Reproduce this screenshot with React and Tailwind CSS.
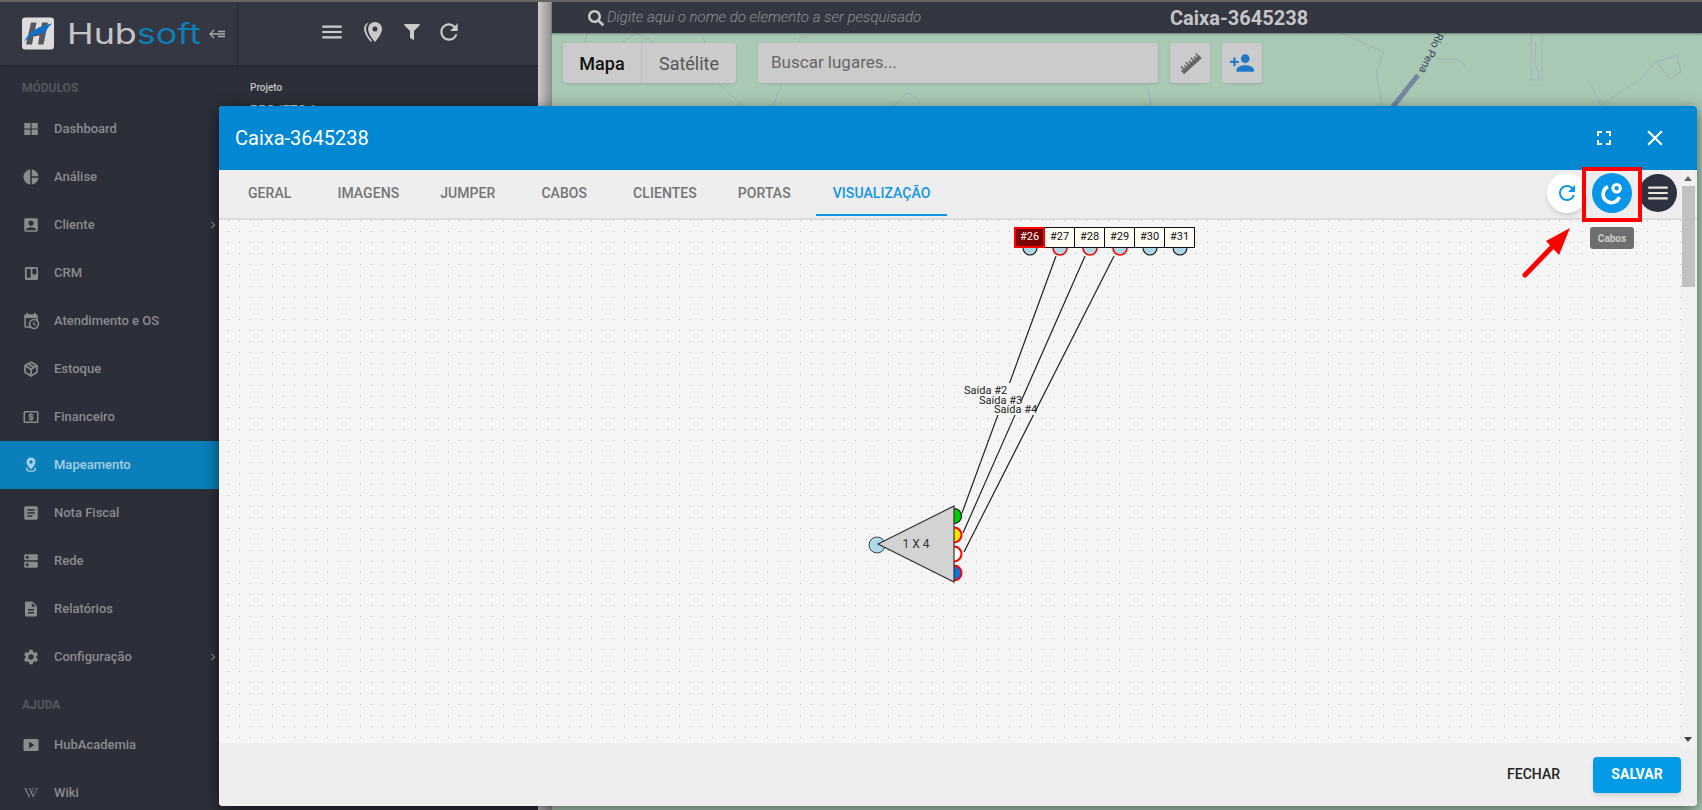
import React from "react";
import { MdPieChart, MdAccountBox, MdLocalAtm, MdArticle, MdDns, MdDescription, MdSettings, MdSmartDisplay, MdRefresh, MdClose, MdFullscreen, MdPersonAdd, MdMenu, MdChevronRight } from "react-icons/md";
import { FaTrello, FaWikipediaW, FaFilter, FaSearch } from "react-icons/fa";
import { LuPackage } from "react-icons/lu";

const Mdi = ({ d, className }) => (
  <svg viewBox="0 0 24 24" fill="currentColor" className={className}><path d={d} /></svg>
);
const calClock = "M15,13H16.5V15.82L18.94,17.23L18.19,18.53L15,16.69V13M19,8H5V19H9.67C9.24,18.09 9,17.07 9,16A7,7 0 0,1 16,9C17.07,9 18.09,9.24 19,9.67V8M5,21C3.89,21 3,20.1 3,19V5C3,3.89 3.89,3 5,3H6V1H8V3H16V1H18V3H19A2,2 0 0,1 21,5V11.1C22.24,12.36 23,14.09 23,16A7,7 0 0,1 16,23C14.09,23 12.36,22.24 11.1,21H5M16,11.15A4.85,4.85 0 0,0 11.15,16C11.15,18.68 13.32,20.85 16,20.85A4.85,4.85 0 0,0 20.85,16C20.85,13.32 18.68,11.15 16,11.15Z";
const pins = "M14,11.5A2.5,2.5 0 0,0 16.5,9A2.5,2.5 0 0,0 14,6.5A2.5,2.5 0 0,0 11.5,9A2.5,2.5 0 0,0 14,11.5M14,2C17.86,2 21,5.13 21,9C21,14.25 14,22 14,22C14,22 7,14.25 7,9A7,7 0 0,1 14,2M5,9C5,13.5 10.08,19.66 11,20.81L10,22C10,22 3,14.25 3,9C3,5.83 5.11,3.15 8,2.29C6.16,3.94 5,6.33 5,9Z";
const pinCircle = "M12 2a6 6 0 0 0-6 6c0 4.2 6 10 6 10s6-5.800 6-10a6 6 0 0 0-6-6zm0 8.200a2.200 2.200 0 1 1 0-4.400 2.200 2.200 0 0 1 0 4.400zM5 17.500C5 16.500 6 15.800 7.200 15.300l1 1.300C7.500 16.900 7 17.200 7 17.500c0 .9 2.200 1.700 5 1.700s5-.8 5-1.700c0-.3-.5-.6-1.200-.9l1-1.300C18 15.800 19 16.500 19 17.500c0 2.200-3.100 3.500-7 3.500s-7-1.300-7-3.500z";
const grid = "M3 4h8.200v7.200H3zM12.800 4H21v7.200h-8.200zM3 12.800h8.200V20H3zM12.800 12.800H21V20h-8.200z";

const menu1 = [
  { label: "Dashboard", icon: <Mdi d={grid} className="w-[18px] h-[18px]" /> },
  { label: "Análise", icon: <MdPieChart className="w-[18px] h-[18px]" /> },
  { label: "Cliente", icon: <MdAccountBox className="w-[18px] h-[18px]" />, arrow: true },
  { label: "CRM", icon: <FaTrello className="w-[15px] h-[15px] mx-[1.5px]" /> },
  { label: "Atendimento e OS", icon: <Mdi d={calClock} className="w-[18px] h-[18px]" /> },
  { label: "Estoque", icon: <LuPackage strokeWidth={2.6} className="w-[16px] h-[16px] mx-[1px]" /> },
  { label: "Financeiro", icon: <MdLocalAtm className="w-[18px] h-[18px]" /> },
  { label: "Mapeamento", icon: <Mdi d={pinCircle} className="w-[18px] h-[18px]" />, active: true },
  { label: "Nota Fiscal", icon: <MdArticle className="w-[18px] h-[18px]" /> },
  { label: "Rede", icon: <MdDns className="w-[18px] h-[18px]" /> },
  { label: "Relatórios", icon: <MdDescription className="w-[18px] h-[18px]" /> },
  { label: "Configuração", icon: <MdSettings className="w-[18px] h-[18px]" />, arrow: true },
];
const menu2 = [
  { label: "HubAcademia", icon: <MdSmartDisplay className="w-[18px] h-[18px]" /> },
  { label: "Wiki", icon: <FaWikipediaW className="w-[14px] h-[14px] mx-[2px]" /> },
];

function Item({ item }) {
  return (
    <div className={"relative h-[48px] shrink-0 flex items-center pl-[22px] text-[13px] font-medium " + (item.active ? "bg-[#0a7fba] text-[#a5cfe4]" : "text-[#8a8b91]")}>
      <span className="w-[32px] shrink-0 flex">{item.icon}</span>
      <span>{item.label}</span>
      {item.arrow && <MdChevronRight className="absolute left-[206px] w-[14px] h-[14px]" />}
    </div>
  );
}

function Sidebar() {
  return (
    <aside className="w-[238px] shrink-0 flex flex-col bg-[#2c2e39] border-r border-[#2a2c36]">
      <div className="h-[63px] shrink-0 bg-[#353843] flex items-center pl-[22px] shadow-[0_1px_2px_rgba(0,0,0,0.25)] relative z-10">
        <svg viewBox="0 0 32 32" className="w-[32px] h-[33px] shrink-0">
          <rect x="0" y="0" width="32" height="32" rx="3" fill="#dcdcdc" />
          <path d="M9 5h5.500l-1.500 8 6-1 1-7h6l-4.500 22h-5.500l1.500-9-6 1-1.500 8H4z" fill="#55575c" />
          <path d="M2 24C8 13 18 8 30 6c-3 3-6 6-7 10-8-1-14 3-21 8z" fill="#0f6fc6" />
        </svg>
        <div className="ml-[13px] w-[133px] whitespace-nowrap text-[28px] leading-none font-normal font-['Inter',sans-serif] scale-x-[1.28] origin-left">
          <span className="text-[#c4c5c8]">Hub</span><span className="text-[#0c7fb5]">soft</span>
        </div>
        <svg viewBox="0 0 16 10" className="ml-[9px] w-[16px] h-[10px] shrink-0 text-[#a8a9ad]" fill="none" stroke="currentColor" strokeWidth="1.300">
          <path d="M5 1 1 5l4 4M1 5h15M9 2.500H16M9 7.500H16" />
        </svg>
      </div>
      <div className="h-[40px] shrink-0 flex items-center pl-[22px] pt-[5px] text-[12px] font-bold text-[#55575f]">MÓDULOS</div>
      {menu1.map((m) => <Item key={m.label} item={m} />)}
      <div className="h-[40px] shrink-0 flex items-center pl-[22px] pt-[8px] text-[12px] font-bold text-[#55575f]">AJUDA</div>
      {menu2.map((m) => <Item key={m.label} item={m} />)}
    </aside>
  );
}

function Column() {
  return (
    <section className="w-[300px] shrink-0 flex flex-col bg-[#2c2e39]">
      <div className="h-[63px] shrink-0 bg-[#353843] flex items-center pb-[3px] text-[#c9cacc] pl-[81px] shadow-[0_1px_2px_rgba(0,0,0,0.25)]">
        <MdMenu className="w-[26px] h-[26px]" />
        <Mdi d={pins} className="w-[24px] h-[24px] ml-[16px]" />
        <FaFilter className="w-[16px] h-[16px] ml-[19px]" />
        <MdRefresh className="w-[26px] h-[26px] ml-[16px]" />
      </div>
      <div className="pl-[12px] pt-[16px]">
        <div className="text-[10px] leading-[14px] font-medium text-[#c4c5c8]">Projeto</div>
        <div className="text-[13px] leading-[18px] mt-[6px] text-[#c4c5c8]">PROJETO 1</div>
      </div>
    </section>
  );
}

function MapPanel() {
  return (
    <section className="relative flex-1 min-w-0 flex flex-col bg-[#aac9b5]">
      <svg className="absolute inset-0 w-full h-full" viewBox="0 0 1150 808" fill="none">
        <path d="M788 31 832 50 824 70 830 104M883 57H905L914 65M979 31V78H990V31ZM983 40c3 8-3 14 1 24s3 8 3 14M1038 81 1049 103 1089 77 1103 60 1125 53 1129 70 1118 77 1105 60M594 81 600 104M35 31 33 41M70 40 85 31 103 41M150 31 153 41M246 41 248 35H256M166 81 191 104M230 81 221 104M341 104 355 91 368 98" stroke="#a0b2b8" strokeWidth="1" />
        <path d="M840 106 866 73" stroke="#7487a3" strokeWidth="5" />
        <text transform="translate(885 30) rotate(115)" fontSize="11" fill="#39445e" fontFamily="Roboto, sans-serif">Rio Pena</text>
      </svg>
      <div className="relative z-10 h-[31px] shrink-0 flex items-center bg-[#343741] text-[#8f9197] shadow-[0_1px_2px_rgba(0,0,0,0.4)]">
        <FaSearch className="ml-[36px] w-[16px] h-[16px] text-[#c7c8ca]" />
        <span className="text-[15px] italic font-light ml-[3px]">Digite aqui o nome do elemento a ser pesquisado</span>
        <span className="absolute left-[618px] text-[20px] font-bold text-[#c5c5c7]">Caixa-3645238</span>
      </div>
      <div className="relative z-10 mt-[10px] ml-[11px] flex items-stretch h-[40px]">
        <div className="flex rounded-[3px] bg-[#cbcbcb] text-[18px] shadow-sm w-[173px]">
          <span className="w-[79px] flex items-center justify-center font-medium text-[#111] border-r border-[#bdbdbd]">Mapa</span>
          <span className="flex-1 flex items-center justify-center text-[#565656]">Satélite</span>
        </div>
        <div className="ml-[22px] w-[400px] rounded-[3px] bg-[#cbcbcb] flex items-center pl-[13px] text-[17px] text-[#666] shadow-sm">Buscar lugares...</div>
        <div className="ml-[12px] w-[40px] rounded-[3px] bg-[#cbcbcb] flex items-center justify-center shadow-sm">
          <svg viewBox="0 0 24 24" className="w-[26px] h-[26px] text-[#666]" fill="currentColor">
            <g transform="rotate(-42 12 12)">
              <rect x="1" y="12" width="22" height="4" />
              <path d="M3 9h1.500v3H3zM6 10h1.500v2H6zM9 9h1.500v3H9zM12 10h1.500v2H12zM15 9h1.500v3H15zM18 10h1.500v2H18zM21 9h1.500v3H21z" />
            </g>
          </svg>
        </div>
        <div className="ml-[12px] w-[40px] rounded-[3px] bg-[#cbcbcb] flex items-center justify-center shadow-sm">
          <MdPersonAdd className="w-[26px] h-[26px] text-[#1f78c8]" />
        </div>
      </div>
    </section>
  );
}

const tabs = [
  ["GERAL", "ml-[29px]"],
  ["IMAGENS", "ml-[46px]"],
  ["JUMPER", "ml-[41px]"],
  ["CABOS", "ml-[46px]"],
  ["CLIENTES", "ml-[46px]"],
  ["PORTAS", "ml-[41px]"],
];

function Diagram() {
  const ports = ["#26", "#27", "#28", "#29", "#30", "#31"];
  const tops = [[1030, "#111"], [1060, "#f00"], [1090, "#f00"], [1120, "#f00"], [1150, "#111"], [1180, "#111"]];
  return (
    <>
      <svg className="absolute inset-0 w-full h-full" viewBox="219 220 1463 523" fill="none">
        {tops.map(([x, c]) => <circle key={x} cx={x} cy="248" r="7" fill="#add8e6" stroke={c} strokeWidth={c === "#f00" ? 1.6 : 1.1} />)}
        <path d="M962 513 1056 256M963 533 1085 256M964 552 1114 256" stroke="#222" strokeWidth="1.200" />
        <rect x="964" y="383" width="47" height="12" fill="#f5f5f5" />
        <rect x="979" y="393" width="42" height="12" fill="#f5f5f5" />
        <rect x="994" y="403" width="42" height="12" fill="#f5f5f5" />
        <g fontSize="11" fill="#222" fontFamily="Roboto, sans-serif">
          <text x="964" y="393.500">Saída #2</text>
          <text x="979" y="403.500">Saída #3</text>
          <text x="994" y="413">Saída #4</text>
        </g>
        <circle cx="877" cy="545" r="8" fill="#add8e6" stroke="#444" strokeWidth="1" />
        <circle cx="954" cy="516" r="7.500" fill="#00d000" stroke="#111" strokeWidth="1.200" />
        <circle cx="954" cy="535" r="7.500" fill="#f5e600" stroke="#f00" strokeWidth="2" />
        <circle cx="954" cy="554" r="7.500" fill="#fff" stroke="#f00" strokeWidth="2" />
        <circle cx="954" cy="573" r="7.500" fill="#0a78d8" stroke="#f00" strokeWidth="2" />
        <path d="M878 544 954 506V582Z" fill="#d3d3d3" stroke="#333" strokeWidth="1.200" />
        <text x="916" y="548" textAnchor="middle" fontSize="12" fill="#333" fontFamily="Roboto, sans-serif">1 X 4</text>
      </svg>
      <div className="absolute left-[795px] top-[7px] flex h-[21px]">
        {ports.map((p, i) => (
          <span key={p} className={"flex items-center justify-center text-[11px] " + (i === 0 ? "w-[31px] bg-[#7b0000] text-white border-[2px] border-[#f00]" : "w-[30px] border-y border-r bg-[#fffdf5] text-[#111] border-[#111]")}>{p}</span>
        ))}
      </div>
    </>
  );
}

function Modal() {
  return (
    <div className="absolute left-[219px] top-[106px] w-[1478px] h-[700px] rounded-[4px] bg-[#eee] flex flex-col overflow-hidden shadow-[0_4px_16px_rgba(0,0,0,0.55)]">
      <header className="h-[64px] shrink-0 bg-[#0288d2] flex items-center pl-[16px] text-white">
        <h1 className="text-[20px] font-normal">Caixa-3645238</h1>
        <MdFullscreen className="ml-auto w-[24px] h-[24px]" />
        <MdClose className="ml-[26px] mr-[29px] w-[26px] h-[26px]" />
      </header>
      <div className="relative h-[50px] shrink-0 flex items-center pb-[2px] border-b-2 border-[#ddd] text-[14px] font-medium tracking-[0.06px] text-[#757575]">
        {tabs.map(([t, c]) => <span key={t} className={c}>{t}</span>)}
        <span className="relative ml-[42px] text-[#0f96e6]">
          VISUALIZAÇÃO
          <span className="absolute left-[-17px] right-[-17px] top-[31px] h-[2px] bg-[#0f96e6]" />
        </span>
        <div className="absolute left-[1328px] top-[3px] w-[40px] h-[40px] rounded-full bg-white text-[#0f96e6] flex items-center justify-center shadow-md">
          <MdRefresh className="w-[24px] h-[24px]" />
        </div>
        <div className="absolute left-[1373px] top-[3px] w-[40px] h-[40px] rounded-full bg-[#0996e8] text-white flex items-center justify-center">
          <svg viewBox="0 0 24 24" className="w-[28px] h-[28px]" fill="none" stroke="currentColor">
            <path d="M8.500 6.500A7.200 7.200 0 1 0 18.300 15.500" strokeWidth="3" />
            <circle cx="16" cy="8" r="3.200" strokeWidth="2.600" />
          </svg>
        </div>
        <div className="absolute left-[1420px] top-[4px] w-[38px] h-[38px] rounded-full bg-[#2e3240] text-[#e8e4d8] flex items-center justify-center">
          <MdMenu className="w-[26px] h-[26px]" />
        </div>
      </div>
      <div className="flex-1 min-h-0 flex">
        <div className="relative flex-1 min-w-0 bg-[#f5f5f5] bg-[radial-gradient(circle_at_0.5px_0.5px,#b8b8b8_0.5px,transparent_1px)] bg-[size:11px_11px] bg-[position:9px_0px]">
          <Diagram />
        </div>
        <div className="w-[15px] shrink-0 bg-[#f1f1f1] relative" />
      </div>
      <footer className="h-[63px] shrink-0 bg-[#eee] flex items-center justify-end pr-[16px]">
        <span className="text-[14px] font-medium text-[#222] mr-[33px]">FECHAR</span>
        <button className="w-[88px] h-[36px] rounded-[4px] bg-[#039be5] text-white text-[14px] font-bold shadow-md">SALVAR</button>
      </footer>
      <div className="absolute right-[2px] top-[64px] h-[579px] w-[14px] bg-[#f1f1f1] flex flex-col items-center">
        <span className="mt-[6px] w-0 h-0 border-x-[4px] border-x-transparent border-b-[5px] border-b-[#666]" />
        <span className="mt-[5px] w-[13px] h-[101px] bg-[#c1c1c1]" />
        <span className="mt-auto mb-[7px] w-0 h-0 border-x-[4px] border-x-transparent border-t-[5px] border-t-[#444]" />
      </div>
    </div>
  );
}

export default function App() {
  return (
    <div className="relative w-[1702px] h-[810px] overflow-hidden flex font-['Roboto',sans-serif] border-t-2 border-[#666] box-border">
      <Sidebar />
      <Column />
      <div className="w-[14px] shrink-0 bg-gradient-to-r from-[#cdcdcd] to-[#8e8e8e]" />
      <MapPanel />
      <div className="absolute inset-x-0 top-[-2px]"><Modal /></div>
      <div className="absolute left-[1582px] top-[165px] w-[60px] h-[55px] border-[4px] border-[#f00]" />
      <div className="absolute left-[1590px] top-[225px] w-[44px] h-[22px] rounded-[3px] bg-[#6e6e6e] text-[#ccc] text-[10px] font-bold flex items-center justify-center">Cabos</div>
      <svg className="absolute left-[1515px] top-[216px] w-[65px] h-[65px]" viewBox="0 0 65 65">
        <path d="M10 57 40 26" stroke="#f00" strokeWidth="5" strokeLinecap="round" />
        <path d="M55 10 31 23 44 37Z" fill="#f00" />
      </svg>
    </div>
  );
}
